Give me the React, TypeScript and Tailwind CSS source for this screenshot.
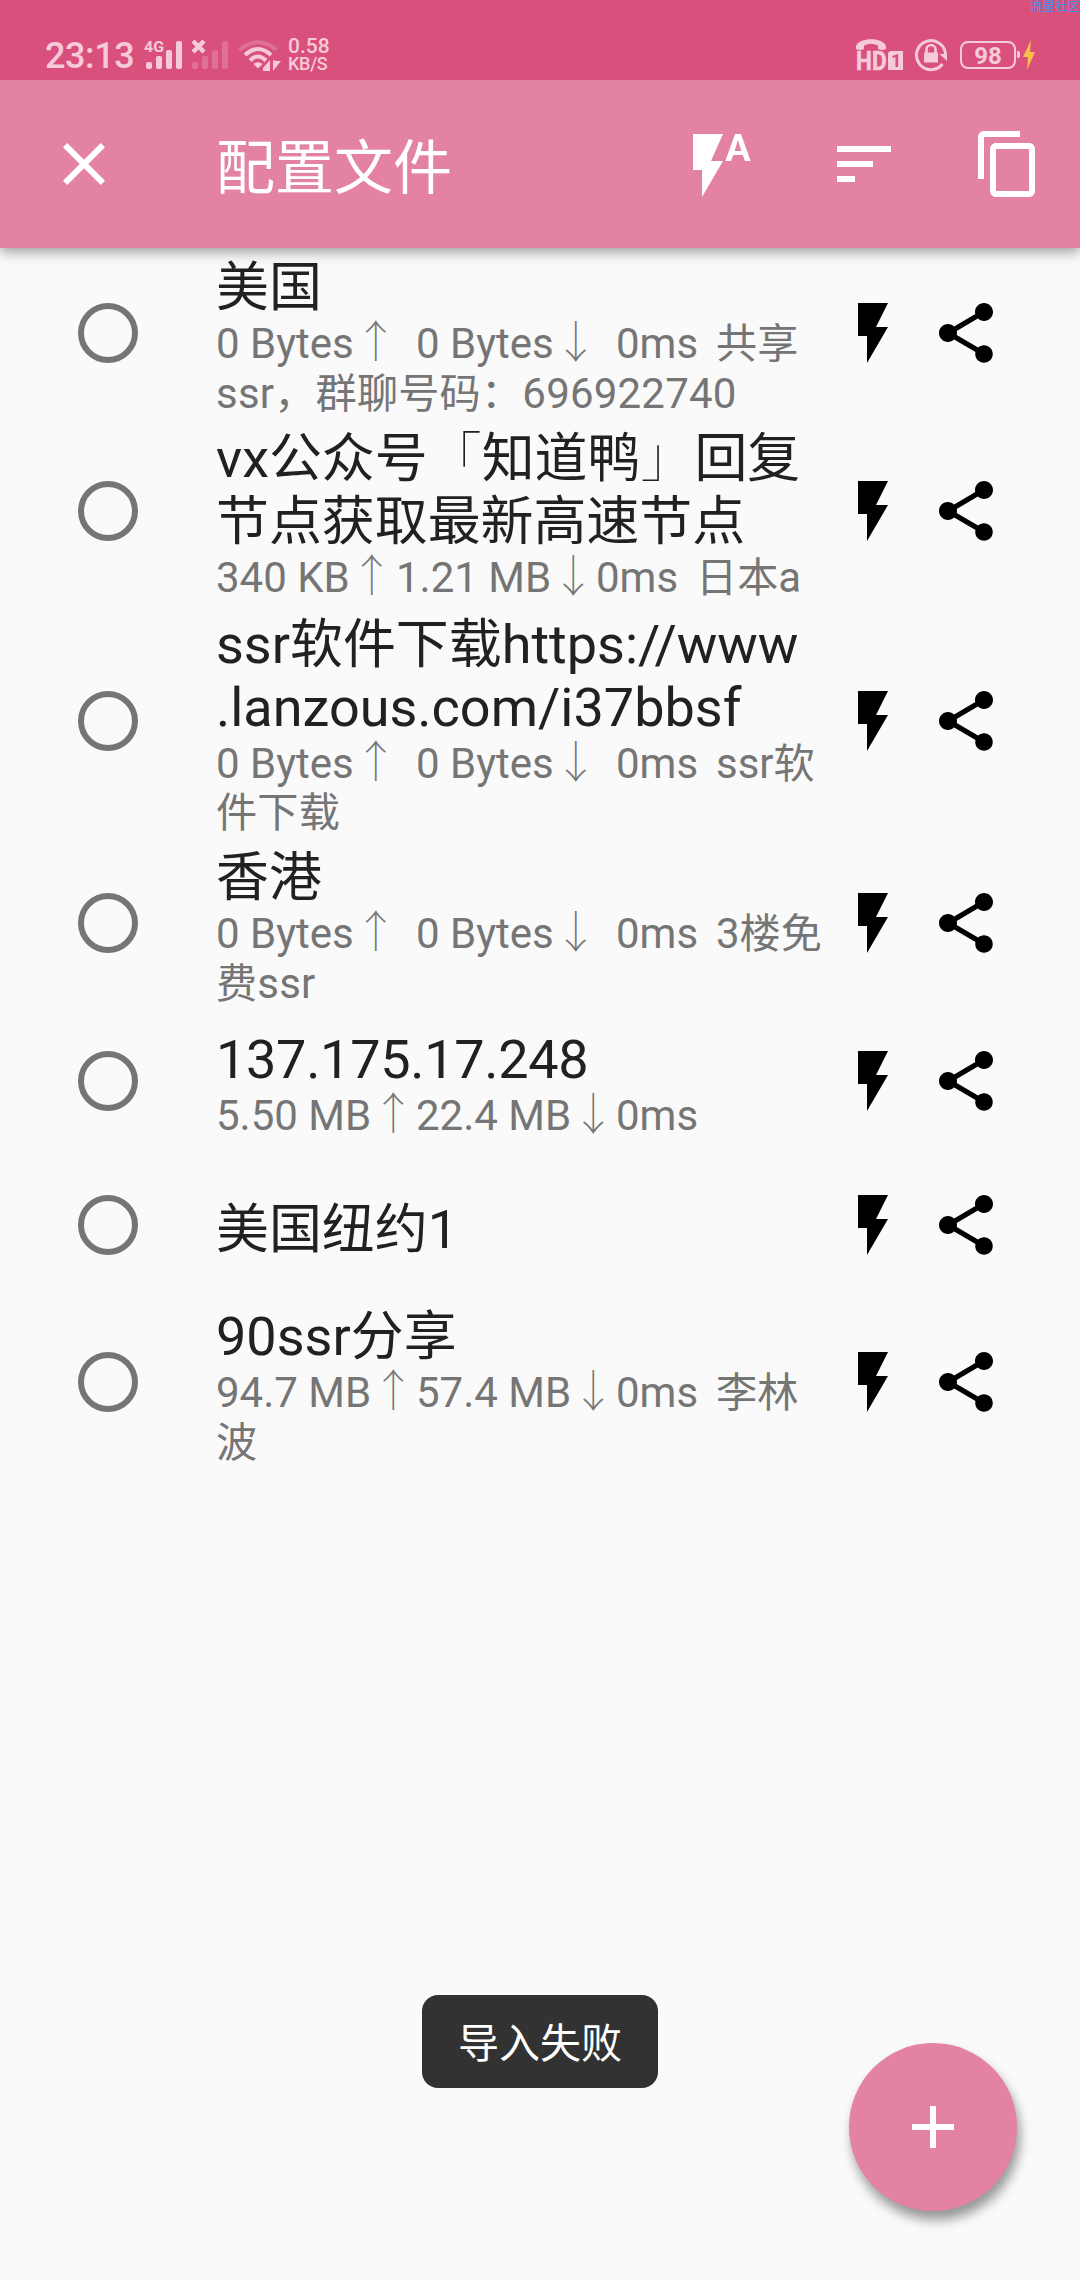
import React from "react";

type Profile = {
  title: string[];
  titleClass?: string;
  height: string;
  traffic?: { up: string; upWidth: string; down: string; note?: string };
  extra?: string;
};

const profiles: Profile[] = [
  {
    title: ["美国"],
    height: "h-[170px]",
    traffic: { up: "0 Bytes", upWidth: "w-[200px]", down: "0 Bytes", note: "共享" },
    extra: "ssr，群聊号码：696922740",
  },
  {
    title: ["vx公众号「知道鸭」回复", "节点获取最新高速节点"],
    height: "h-[186px]",
    traffic: { up: "340 KB", upWidth: "w-[180px]", down: "1.21 MB", note: "日本a" },
  },
  {
    title: ["ssr软件下载https://www", ".lanzous.com/i37bbsf"],
    height: "h-[234px]",
    traffic: { up: "0 Bytes", upWidth: "w-[200px]", down: "0 Bytes", note: "ssr软" },
    extra: "件下载",
  },
  {
    title: ["香港"],
    height: "h-[170px]",
    traffic: { up: "0 Bytes", upWidth: "w-[200px]", down: "0 Bytes", note: "3楼免" },
    extra: "费ssr",
  },
  {
    title: ["137.175.17.248"],
    titleClass: "tracking-[-0.3px]",
    height: "h-[145px]",
    traffic: { up: "5.50 MB", upWidth: "w-[200px]", down: "22.4 MB" },
  },
  { title: ["美国纽约1"], height: "h-[144px]" },
  {
    title: ["90ssr分享"],
    height: "h-[170px]",
    traffic: { up: "94.7 MB", upWidth: "w-[200px]", down: "57.4 MB", note: "李林" },
    extra: "波",
  },
];

function Icon({ d, className = "" }: { d: string; className?: string }) {
  return (
    <svg viewBox="0 0 24 24" className={`size-[72px] shrink-0 fill-current ${className}`}>
      <path d={d} />
    </svg>
  );
}

const CLOSE = "M19 6.41L17.59 5 12 10.59 6.41 5 5 6.41 10.59 12 5 17.59 6.41 19 12 13.41 17.59 19 19 17.59 13.41 12z";
const FLASH_AUTO =
  "M3 2v12h3v9l7-12H9l4-9H3zm16 0h-2l-3.2 9h1.9l.7-2h3.2l.7 2h1.9L19 2zm-2.15 5.65L18 4l1.15 3.65h-2.3z";
const SORT = "M3 18h6v-2H3v2zM3 6v2h18V6H3zm0 7h12v-2H3v2z";
const COPY =
  "M16 1H4c-1.1 0-2 .9-2 2v14h2V3h12V1zm3 4H8c-1.1 0-2 .9-2 2v14c0 1.1.9 2 2 2h11c1.1 0 2-.9 2-2V7c0-1.1-.9-2-2-2zm0 16H8V7h11v14z";
const FLASH = "M7 2v11h3v9l7-12h-4l4-8z";
const SHARE =
  "M18 16.08c-.76 0-1.44.3-1.96.77L8.91 12.7c.05-.23.09-.46.09-.7s-.04-.47-.09-.7l7.05-4.11c.54.5 1.25.81 2.04.81 1.66 0 3-1.34 3-3s-1.34-3-3-3-3 1.34-3 3c0 .24.04.47.09.7L8.04 9.81C7.5 9.31 6.79 9 6 9c-1.66 0-3 1.34-3 3s1.34 3 3 3c.79 0 1.5-.31 2.04-.81l7.12 4.16c-.05.21-.08.43-.08.65 0 1.61 1.31 2.92 2.92 2.92s2.92-1.31 2.92-2.92-1.31-2.92-2.92-2.92z";
const ADD = "M19 13h-6v6h-2v-6H5v-2h6V5h2v6h6v2z";

function Bars({ x }: { x: number }) {
  return (
    <>
      <rect x={x} y="22" width="6" height="7" rx="2" />
      <rect x={x + 10} y="16" width="6" height="13" rx="2" />
      <rect x={x + 20} y="10" width="6" height="19" rx="2" />
      <rect x={x + 30} y="1" width="6" height="28" rx="2" />
    </>
  );
}

function StatusBar() {
  return (
    <div className="relative z-10 flex h-[80px] items-start bg-[#d9507d] pl-[45px] text-[#f5cbd9]">
      <div className="mt-[35px] w-[95px] text-[36px] leading-[42px] font-medium tracking-[-0.4px] whitespace-nowrap">23:13</div>
      <svg viewBox="0 0 92 32" className="mt-[40px] ml-[2px] h-[32px] w-[92px] overflow-visible fill-current">
        <text x="2" y="11.500" fontSize="15" fontWeight="700" textLength="20" lengthAdjust="spacingAndGlyphs">4G</text>
        <Bars x={4} />
        <path d="M51 1l11 11M62 1L51 12" stroke="currentColor" strokeWidth="4.500" />
        <g opacity=".26"><Bars x={50} /></g>
      </svg>
      <svg viewBox="0 0 44 32" className="mt-[40px] ml-[4px] h-[32px] w-[44px] fill-none stroke-current">
        <path d="M1.5 10Q20 -5.500 38.500 10" strokeWidth="4" opacity=".26" />
        <path d="M7 15Q20 3 33 15" strokeWidth="4" />
        <path d="M12 20.500Q20 12.500 28 20.500" strokeWidth="4" />
        <path d="M15.500 24Q20 20.500 24.500 24L20 28.500z" fill="currentColor" stroke="none" />
        <path d="M25 31V28l7-8v11zM35 20v11l8-10h-5z" fill="currentColor" stroke="none" />
      </svg>
      <div className="mt-[37px] ml-[6px] font-medium whitespace-nowrap">
        <div className="text-[21px] leading-[19px]">0.58</div>
        <div className="text-[18px] leading-[15px] tracking-[-0.3px]">KB/S</div>
      </div>
      <svg viewBox="0 0 50 34" className="absolute top-[38px] left-[855px] h-[34px] w-[50px] overflow-visible fill-current">
        <path d="M1 11V8C4 -1 28 -1 31 8v3q-4 2 -8 0V7.500Q16 4 9 7.500V11q-4 2 -8 0z" />
        <text x="1" y="32" fontSize="26" fontWeight="700" textLength="30.500" lengthAdjust="spacingAndGlyphs" stroke="currentColor" strokeWidth="0.600">HD</text>
        <path d="M35 13h13v19H33V15z" />
        <text x="36" y="29" fontSize="18" fontWeight="700" textLength="9" fill="#d9507d">1</text>
      </svg>
      <svg viewBox="0 0 34 34" className="absolute top-[38px] left-[914px] h-[34px] w-[34px] fill-none stroke-current">
        <path d="M28.500 26A14.500 14.500 0 1 1 31.500 17" strokeWidth="3" />
        <path d="M25.500 16h7.500v7z" fill="currentColor" stroke="none" />
        <path d="M12.500 15v-3.500a4.500 4.500 0 0 1 9 0V15" strokeWidth="2.600" />
        <rect x="10" y="14.500" width="14" height="10" fill="currentColor" stroke="none" />
      </svg>
      <div className="absolute top-[41px] left-[960px] flex h-[28px] w-[56px] items-center justify-center rounded-[8px] border-2 border-current text-[24px] leading-[28px] font-bold">
        <span className="pt-[2px]">98</span>
      </div>
      <div className="absolute top-[51px] left-[1017px] h-[7px] w-[3px] rounded-r-[2px] bg-current" />
      <svg viewBox="0 0 12 30" className="absolute top-[40px] left-[1023px] h-[30px] w-[12px] fill-[#fbbf47]">
        <path d="M8 0L0 17h5L4 30L12 12H7z" />
      </svg>
      <div className="absolute top-0 right-0 text-[12.5px] leading-[13px] whitespace-nowrap text-[#2f9bf5]">流星社区</div>
    </div>
  );
}

/* Han characters are set slightly smaller than the Latin text around them. */
function Mixed({ text }: { text: string }) {
  return (
    <>
      {text.split(/([「」]|[\u3002-\u300b\u4e00-\u9fff\uff00-\uffef]+)/).map((part, i) => {
        if (i % 2 === 0) return part;
        if (part === "「" || part === "」")
          return <span key={i} className="leading-none font-thin">{part}</span>;
        return <span key={i} className="text-[0.98em] leading-none">{part}</span>;
      })}
    </>
  );
}

function Arrow({ children }: { children: string }) {
  return (
    <span className="font-['Noto_Sans_CJK_SC'] text-[44px] leading-[0] font-thin opacity-[0.99]">{children}</span>
  );
}

function Row({ p }: { p: Profile }) {
  return (
    <li className={`flex items-center ${p.height}`}>
      <span className="ml-[78px] size-[60px] shrink-0 rounded-full border-[6px] border-[#757575]" />
      <div className="ml-[78px] w-[621px] pt-[8px] whitespace-pre">
        {p.title.map((line) => (
          <div key={line} className={`h-[63px] text-[54px] leading-[63px] text-[#212121] ${p.titleClass ?? ""}`}>
            <Mixed text={line} />
          </div>
        ))}
        {p.traffic && (
          <div className="flex h-[49.3px] text-[42px] leading-[49.3px] text-[#757575]">
            <span className={p.traffic.upWidth}>{p.traffic.up}<Arrow>↑</Arrow></span>
            <span className="w-[200px]">{p.traffic.down}<Arrow>↓</Arrow></span>
            <span className="w-[100px]">0ms</span>
            {p.traffic.note && <span><Mixed text={p.traffic.note} /></span>}
          </div>
        )}
        {p.extra && (
          <div className="h-[49.3px] text-[42px] leading-[49.3px] tracking-[0.2px] text-[#757575]"><Mixed text={p.extra} /></div>
        )}
      </div>
      <Icon d={FLASH} className="text-black" />
      <Icon d={SHARE} className="ml-[21px] text-black" />
    </li>
  );
}

export default function App() {
  return (
    <div lang="zh-CN" className="relative h-[2280px] w-[1080px] overflow-hidden bg-[#fafafa] font-[Roboto,'Noto_Sans_CJK_SC',sans-serif]">
      <StatusBar />
      <header className="relative flex h-[168px] items-center bg-[#e482a3] pl-[48px] text-white shadow-[0_4px_12px_rgba(0,0,0,0.38)]">
        <Icon d={CLOSE} />
        <h1 className="ml-[96px] w-[468px] pt-[9px] text-[59px] leading-[70px]">配置文件</h1>
        <Icon d={FLASH_AUTO} />
        <Icon d={SORT} className="ml-[72px]" />
        <Icon d={COPY} className="ml-[72px]" />
      </header>
      <ul>
        {profiles.map((p) => <Row key={p.title[0]} p={p} />)}
      </ul>
      <div className="absolute top-[1995px] left-[422px] flex h-[93px] w-[236px] items-center justify-center rounded-[16px] bg-[#323232] pt-[7px] text-[41px] text-white">
        导入失败
      </div>
      <button className="absolute top-[2043px] left-[849px] flex size-[168px] items-center justify-center rounded-full bg-[#e482a3] text-white shadow-[3px_9px_12px_rgba(0,0,0,0.4)]">
        <Icon d={ADD} />
      </button>
    </div>
  );
}
